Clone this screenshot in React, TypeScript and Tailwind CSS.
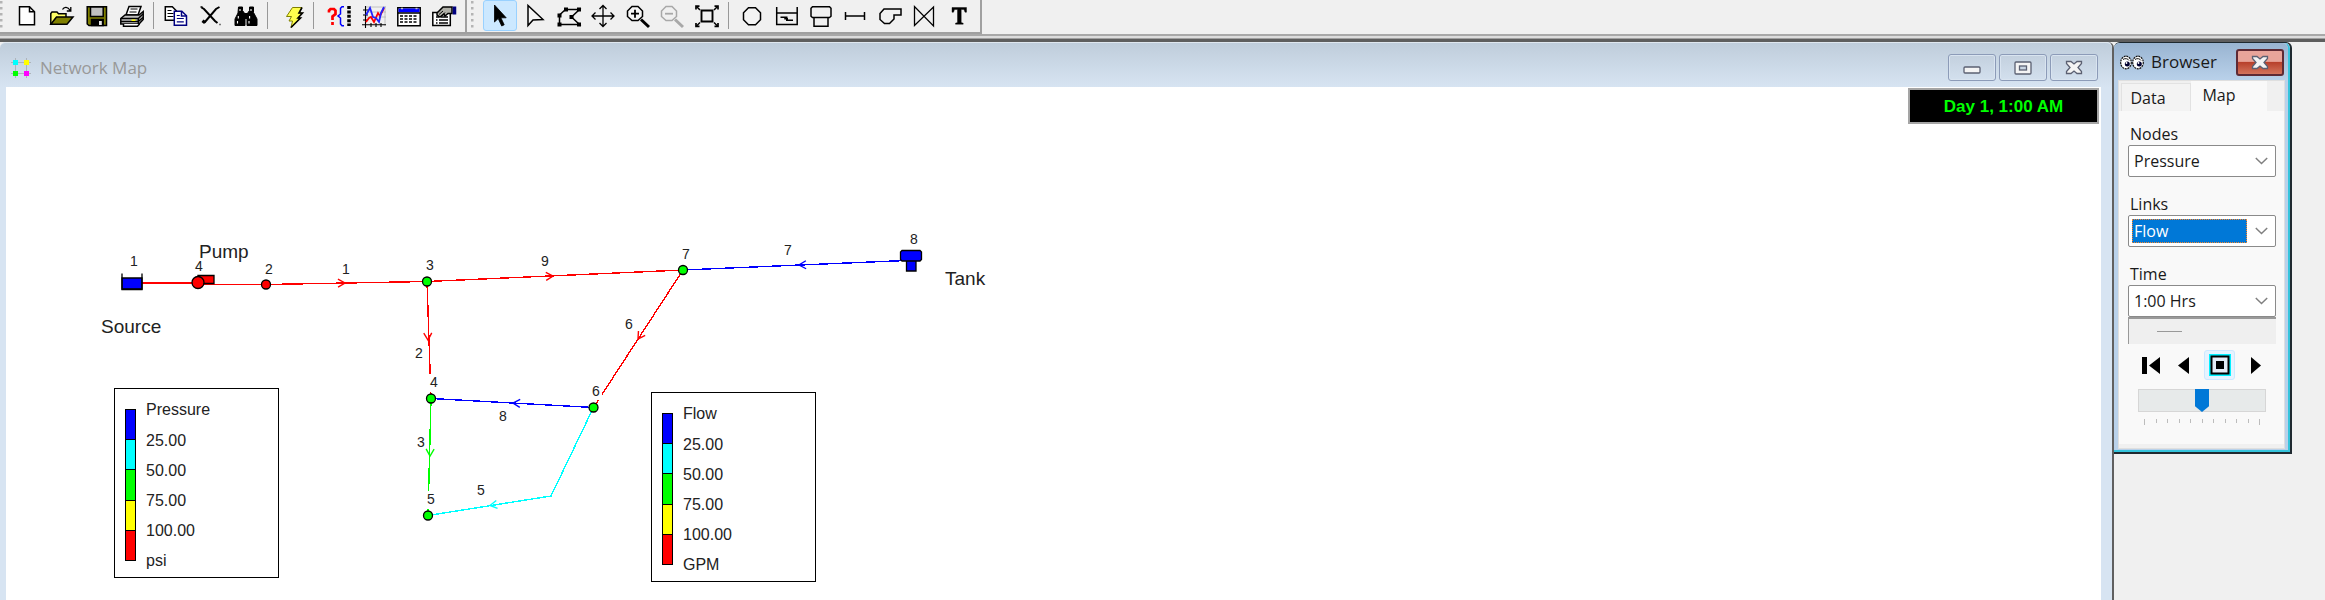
import { useState, type ReactNode } from "react";

type Tool = { name: string; icon: ReactNode };

function Icon({ children }: { children: ReactNode }) {
  return (
    <svg viewBox="0 0 24 24" className="h-6 w-6 shrink-0 overflow-visible" fill="none" stroke="#000" strokeWidth="1.5" aria-hidden="true">
      {children}
    </svg>
  );
}

const fileTools: Tool[] = [
  {
    name: "New",
    icon: (
      <Icon>
        <path d="M4.5 2.8h10l5 5v13H4.5z" fill="#fff" />
        <path d="M14.5 2.8v5h5" />
      </Icon>
    ),
  },
  {
    name: "Open",
    icon: (
      <Icon>
        <path d="M.8 20V9.5L2 8h5l1.5 1.7H16V13" fill="#ffff66" />
        <path d="M.8 20.3 6.5 13H23l-6 7.3z" fill="#808000" />
        <path d="M12.5 5.5c1.5-3 5.5-3 7.5.8M20.8 3v4h-4" strokeWidth="1.3" />
      </Icon>
    ),
  },
  {
    name: "Save",
    icon: (
      <Icon>
        <path d="M2.2 2.8h19.3v18.8H4L2.2 20z" fill="#808000" />
        <path d="M5.5 3h12.7v9.6H5.5z" fill="#c0c0c0" />
        <path d="M6.5 15.5h11.7v6H6.5z" fill="#000" />
        <path d="M14 17h2.8v4H14z" fill="#e8e8e8" stroke="none" />
      </Icon>
    ),
  },
  {
    name: "Print",
    icon: (
      <Icon>
        <path d="M6 11 9 2.5h12l-3 8.5z" fill="#fff" />
        <path d="M10.5 5h7M9.5 8h7" strokeWidth="1.2" />
        <path d="M.8 14.5 5 11h14l4.2-3.5v8L19 20H.8z" fill="#c0c0c0" />
        <path d="M.8 14.5h17.5L23 10M.8 17.5h17.5l4.7-4M18.3 14.5V20" />
        <path d="M3.5 20v2.3h14l2-2.3" fill="#fff" />
        <path d="M11.5 16.2h4" stroke="#ff0" />
      </Icon>
    ),
  },
];

const editTools: Tool[] = [
  {
    name: "Copy",
    icon: (
      <Icon>
        <path d="M1.3 2.8h7l4 4v9.5h-11z" fill="#fff" />
        <path d="M3.5 6.5h4M3.5 9.5h6M3.5 12.5h6" strokeWidth="1.2" />
        <path d="M10.3 7.3h7.5l4.7 4.5v9.5H10.3z" fill="#fff" stroke="#000080" />
        <path d="M17.5 7.3v4.8h5" stroke="#000080" />
        <path d="M12.8 11.5h3M12.8 14.5h7M12.8 17.8h7" stroke="#000080" strokeWidth="1.2" />
      </Icon>
    ),
  },
  {
    name: "Delete",
    icon: (
      <Icon>
        <path d="M2.5 3.5 5 5l11 12 2.5 2M20.5 3 17 5 5.5 18.5" strokeWidth="2" />
        <path d="m5.8 16.5-2 2.5" strokeWidth="3.4" />
        <path d="M1.5 3h2M20.5 20.5h1" />
      </Icon>
    ),
  },
  {
    name: "Find",
    icon: (
      <Icon>
        <path d="M4.5 3h4v3.5L11 10v11.5H1V15l3-6zM15.5 3h4v5.5L23 15v6.5H13V10l2.5-3.5z" fill="#000" strokeWidth="1" />
        <path d="M10 9h4v6h-4z" fill="#000" stroke="none" />
        <path d="M6 5v2M17 5v2M4.3 12v2.5M15.6 12v2.5M3.5 17v2.5M15 17v2.5" stroke="#fff" strokeWidth="1.1" />
      </Icon>
    ),
  },
];

const runTools: Tool[] = [
  {
    name: "Run",
    icon: (
      <Icon>
        <path d="M10.5 3.5H20l-3 5.5h3.5l-4.5 5h2.5L9 23.5l1.5-6.5H7l2.5-4.5H4.5z" fill="#ffff4d" stroke="#808000" strokeWidth="1" />
        <path d="m20 3.5-3 5.5h3.5l-4.5 5h2.5L9 23.5" strokeWidth="1.6" />
      </Icon>
    ),
  },
];

const reportTools: Tool[] = [
  {
    name: "Query",
    icon: (
      <Icon>
        <path d="M2 8.500V6.500L3.500 5H7L8.500 6.500V10L5.500 12.500V16M5.500 18v3" stroke="#f00" strokeWidth="2.700" />
        <path d="M17 2.800h-2l-1.500 1.500V10L11 12l2.500 2v6l1.500 1.700h2" stroke="#00f" />
        <path d="M22 2v20" strokeWidth="3.500" strokeDasharray="3 1.400" />
      </Icon>
    ),
  },
  {
    name: "Graph",
    icon: (
      <Icon>
        <path d="M4 3h20M4 8h20M4 13h20M23 2v20" stroke="#b5b5b5" strokeWidth=".8" />
        <path d="M3.500 2v22M0 20.700h24M1 6h5M1 11h5M1 16h5M9 19v4M14 19v4M19 19v4" strokeWidth="1.100" />
        <path d="m4 18 3-4 2-1 3 5 4-9 2 3 4-8" stroke="#f00" strokeWidth="1.800" />
        <path d="m4 11 4-7 3 9 3 1 3 4 2-9 3-6" stroke="#22f" strokeWidth="1.800" />
      </Icon>
    ),
  },
  {
    name: "Table",
    icon: (
      <Icon>
        <path d="M.8 3.800h22.400v18H.8z" fill="#fff" />
        <path d="M1.500 4.500h21v3.800h-21z" fill="#00f" stroke="none" />
        <path d="M4 4.500h2M18.500 4.500h2" stroke="#c0c0c0" />
        <path d="M.8 9h22.400" />
        <path d="M3 12h18M3 15h18M3 18h18" strokeDasharray="3 1.500" strokeWidth="1.600" />
      </Icon>
    ),
  },
  {
    name: "Options",
    icon: (
      <Icon>
        <path d="M.8 8.500h17.500v13H.8z" fill="#fff" />
        <path d="M4 13h3M9 13h7M4 16h1.500M7 16h9M4 19h1.500M7 19h9" strokeWidth="1.400" />
        <path d="M5 11V9l6-6h9v6.500h-4L13 12l-1-2-4 3z" fill="#b0b0a8" />
        <path d="M7 10.500 11 7M9.500 12 13 8.500" strokeWidth="1" />
        <path d="M22.500 2.500v8" stroke="#000080" strokeWidth="3.500" />
      </Icon>
    ),
  },
];

const mapTools: Tool[] = [
  {
    name: "Select Object",
    icon: (
      <Icon>
        <path d="M6.500 1v17l3.700-3.500 3.500 7.500 2.500-1.200-3.300-7h5.300z" fill="#000" strokeWidth=".8" />
      </Icon>
    ),
  },
  {
    name: "Select Vertex",
    icon: (
      <Icon>
        <path d="M5 1.500v20l5-5.500 10-.5z" fill="#fff" fillOpacity=".3" />
      </Icon>
    ),
  },
  {
    name: "Select Region",
    icon: (
      <Icon>
        <path d="M2.500 20.500v-9.500l6-5.500h14l-8 7.500 8 7.500z" />
        <path d="M.5 9.500h4v4h-4zM7 3.500h4v4H7zM20 3.500h4v4h-4zM12.500 11h4v4h-4zM.5 18.500h4v4h-4zM20 18.500h4v4h-4z" fill="#000" stroke="none" />
      </Icon>
    ),
  },
  {
    name: "Pan",
    icon: (
      <Icon>
        <path d="M12 1.500v21M1 12h22M8.500 5 12 1.500 15.500 5M8.500 19l3.500 3.500 3.500-3.500M4.500 8.500 1 12l3.500 3.500M19.500 8.500 23 12l-3.500 3.500" strokeWidth="1.300" />
      </Icon>
    ),
  },
  {
    name: "Zoom In",
    icon: (
      <Icon>
        <path d="M6 2.500h6l4.500 4.500v5.500L12 16.500H6L1.500 12.500V7z" fill="#fff" fillOpacity=".4" />
        <path d="M5 9.700h8M9 5.700v8" strokeWidth="1.800" />
        <path d="m15 15.500 8 7.500" strokeWidth="3" />
      </Icon>
    ),
  },
  {
    name: "Zoom Out",
    icon: (
      <Icon>
        <g stroke="#a8a8a8">
          <path d="M6 2.500h6l4.500 4.500v5.500L12 16.500H6L1.500 12.500V7z" />
          <path d="M5 9.700h8" strokeWidth="1.800" />
          <path d="m15 15.500 8 7.500" strokeWidth="3" />
        </g>
      </Icon>
    ),
  },
  {
    name: "Full Extent",
    icon: (
      <Icon>
        <path d="M6.500 6.500h11v11h-11z" strokeWidth="1.900" />
        <path d="m1.500 2.500 3.500 3.500M22.500 2.500 19 6M1.500 22 5 18.500M22.500 22 19 18.500" />
        <path d="M1 5.500V2.200h3.500M19.500 2.200H23v3.300M1 19v3.300h3.500M19.500 22.300H23V19" strokeWidth="1.700" />
      </Icon>
    ),
  },
];

const addTools: Tool[] = [
  {
    name: "Add Junction",
    icon: (
      <Icon>
        <path d="M8.500 3.700h7l5 5v7l-5 5h-7l-5-5v-7z" fill="#fff" fillOpacity=".3" />
      </Icon>
    ),
  },
  {
    name: "Add Reservoir",
    icon: (
      <Icon>
        <path d="M1.700 3v17.500h20.500V3M1.700 9h20.500M5.500 13.200h7M10 13.200v1.500h3M11 16.200h7" />
      </Icon>
    ),
  },
  {
    name: "Add Tank",
    icon: (
      <Icon>
        <path d="M3.500 2.700h17l1.500 1.500v8L20.500 13.500h-17L2 12.200v-8zM5 13.700v8.500h14v-8.500" />
      </Icon>
    ),
  },
  {
    name: "Add Pipe",
    icon: (
      <Icon>
        <path d="M2.500 8v8M21.500 8v8M2.500 12h19" />
      </Icon>
    ),
  },
  {
    name: "Add Pump",
    icon: (
      <Icon>
        <path d="M6 5h17v6h-7v4l-4.500 4.500h-5L2 15.500v-6z" />
      </Icon>
    ),
  },
  {
    name: "Add Valve",
    icon: (
      <Icon>
        <path d="M2.500 2.500v19L21.500 3v19z" strokeWidth="1.300" />
      </Icon>
    ),
  },
  {
    name: "Add Label",
    icon: (
      <Icon>
        <path d="M5 3.500h14.500v4.700H18L17 5.500h-2.800v13l2 .7v1H8.500v-1l2-.7v-13H7.500l-1 2.700H5z" fill="#000" strokeWidth=".4" />
      </Icon>
    ),
  },
];

function ToolGroup({ tools, className, active }: { tools: Tool[]; className: string; active?: string }) {
  return (
    <div className={`flex ${className}`}>
      {tools.map((t) => (
        <button
          key={t.name}
          type="button"
          aria-label={t.name}
          className={`flex h-[31px] flex-1 items-center justify-center rounded-[3px] border ${
            t.name === active ? "border-[#99d1ff] bg-[#cce8ff]" : "border-transparent"
          }`}
        >
          {t.icon}
        </button>
      ))}
    </div>
  );
}

function Separator() {
  return <div className="mx-1 mt-[2px] h-[27px] w-px shrink-0 bg-[#989898]" />;
}

function Grip() {
  return (
    <svg viewBox="0 0 4 30" className="mx-1 h-[30px] w-1 shrink-0" aria-hidden="true">
      {[1, 7, 13, 19, 25].map((y) => (
        <rect key={y} x="0" y={y} width="2.500" height="2.500" fill="#b4b4b4" />
      ))}
    </svg>
  );
}

function Toolbars() {
  return (
    <header className="bg-[#f0f0f0]">
      <div className="flex border-b-2 border-[#a8a8a8]">
        <div className="flex h-[34px] border-r-2 border-b-2 border-[#a0a0a0]">
          <div className="-ml-1 pr-px">
            <Grip />
          </div>
          <ToolGroup tools={fileTools} className="w-[140px]" />
          <Separator />
          <ToolGroup tools={editTools} className="w-[105px]" />
          <Separator />
          <ToolGroup tools={runTools} className="w-[37px] pl-[6px]" />
          <Separator />
          <ToolGroup tools={reportTools} className="ml-1 w-[139px]" />
          <div className="w-1" />
        </div>
        <div className="flex h-[34px] border-r-2 border-b-2 border-[#a0a0a0]">
          <Grip />
          <ToolGroup tools={mapTools} className="ml-1 w-[241px]" active="Select Object" />
          <Separator />
          <ToolGroup tools={addTools} className="ml-[2px] w-[241px]" />
          <div className="w-1" />
        </div>
      </div>
      <div className="h-[2px] bg-[#dcdcdc]" />
      <div className="h-px bg-[#a0a0a0]" />
      <div className="h-[3px] bg-[#5e5e5e]" />
    </header>
  );
}

const RED = "#ff0000";
const BLUE = "#0000ff";
const CYAN = "#00ffff";
const GREEN = "#00ff00";

const links = [
  { id: "source", color: RED, points: "142,283 198,283 198,284.5 266,284.5" },
  { id: "1", color: RED, points: "266,284.5 427,281.5" },
  { id: "9", color: RED, points: "427,281.5 683,270" },
  { id: "7", color: BLUE, points: "683,270 906,260.500" },
  { id: "2", color: RED, points: "427,281.5 431,398.5" },
  { id: "6", color: RED, points: "683,270 593.5,407.5" },
  { id: "8", color: BLUE, points: "593.5,407.5 431,398.5" },
  { id: "3", color: GREEN, points: "431,398.5 428,515.5" },
  { id: "5", color: CYAN, points: "593.5,407.5 551,496 428,515.5" },
];

const arrows = [
  { x: 345, y: 283, angle: -1, color: RED },
  { x: 553, y: 276, angle: -3, color: RED },
  { x: 799, y: 265, angle: 178, color: BLUE },
  { x: 428, y: 340, angle: 88, color: RED },
  { x: 638, y: 339, angle: 123, color: RED },
  { x: 513, y: 403, angle: 183, color: BLUE },
  { x: 430, y: 456, angle: 91, color: GREEN },
  { x: 490, y: 505.5, angle: 171, color: CYAN },
];

const nodes = [
  { id: "2", x: 266, y: 284.5, color: RED },
  { id: "3", x: 427, y: 281.5, color: GREEN },
  { id: "7", x: 683, y: 270, color: GREEN },
  { id: "4", x: 431, y: 398.5, color: GREEN },
  { id: "6", x: 593.5, y: 407.5, color: GREEN },
  { id: "5", x: 428, y: 515.5, color: GREEN },
];

const labels = [
  { text: "1", x: 134, y: 266 },
  { text: "4", x: 199, y: 271 },
  { text: "2", x: 269, y: 274 },
  { text: "1", x: 346, y: 274 },
  { text: "3", x: 430, y: 270 },
  { text: "9", x: 545, y: 266 },
  { text: "7", x: 686, y: 259 },
  { text: "7", x: 788, y: 255 },
  { text: "8", x: 914, y: 244 },
  { text: "2", x: 419, y: 358 },
  { text: "4", x: 434, y: 387 },
  { text: "6", x: 629, y: 329 },
  { text: "6", x: 596, y: 396 },
  { text: "8", x: 503, y: 421 },
  { text: "3", x: 421, y: 447 },
  { text: "5", x: 431, y: 504 },
  { text: "5", x: 481, y: 495 },
];

function Network() {
  return (
    <svg
      viewBox="6 87 1000 513"
      className="h-[513px] w-[1000px]"
      fontFamily="'Liberation Sans', Arial, sans-serif"
      role="img"
      aria-label="Network"
    >
      <g fill="none" strokeWidth="1.400">
        {links.map((l) => (
          <polyline key={l.id} points={l.points} stroke={l.color} shapeRendering="crispEdges" />
        ))}
        {arrows.map((a) => (
          <path
            key={`${a.x}-${a.y}`}
            d="M-7-4 0 0l-7 4"
            stroke={a.color}
            transform={`translate(${a.x} ${a.y}) rotate(${a.angle})`}
          />
        ))}
      </g>
      <g fill="#fff">
        <rect x="428" y="374" width="11" height="18" />
        <rect x="591" y="383" width="11" height="17" />
        <rect x="425" y="491" width="11" height="18" />
      </g>
      <g stroke="#000" strokeWidth="1.300">
        <path d="M122 278h20v11h-20z" fill={BLUE} />
        <path d="M122 273.500v16h20v-16" fill="none" />
        <path d="M198 275.500h16v8h-16z" fill={RED} />
        <circle cx="198" cy="282.500" r="6" fill={RED} />
        <path d="M902 250.500h18l1.500 1.500v7.500L920 261h-18l-1.500-1.500V252zM906.500 261v10h9.500v-10z" fill={BLUE} />
        {nodes.map((n) => (
          <circle key={n.id} cx={n.x} cy={n.y} r="4.500" fill={n.color} />
        ))}
      </g>
      <g fill="#222" fontSize="14" textAnchor="middle">
        {labels.map((l) => (
          <text key={`${l.x}-${l.y}`} x={l.x} y={l.y}>
            {l.text}
          </text>
        ))}
      </g>
      <g fill="#222" fontSize="19">
        <text x="199" y="258">Pump</text>
        <text x="101" y="333">Source</text>
        <text x="945" y="285">Tank</text>
      </g>
    </svg>
  );
}

function Legend({ title, unit, className }: { title: string; unit: string; className: string }) {
  return (
    <div
      className={`absolute flex h-[190px] w-[165px] border border-black bg-white pl-[10px] font-['Liberation_Sans',Arial,sans-serif] text-base text-[#222] ${className}`}
    >
      <div className="mt-5 flex h-[152px] w-[11px] flex-col divide-y divide-black border border-black">
        <div className="flex-1 bg-[#0000ff]" />
        <div className="flex-1 bg-[#00ffff]" />
        <div className="flex-1 bg-[#00ff00]" />
        <div className="flex-1 bg-[#ffff00]" />
        <div className="flex-1 bg-[#ff0000]" />
      </div>
      <ul className="ml-[10px] pt-[6px] leading-[30px]">
        <li className="pb-px">{title}</li>
        <li>25.00</li>
        <li>50.00</li>
        <li>75.00</li>
        <li>100.00</li>
        <li>{unit}</li>
      </ul>
    </div>
  );
}

function CaptionButton({ name, children }: { name: string; children: ReactNode }) {
  return (
    <button
      type="button"
      aria-label={name}
      className="flex h-[27px] w-12 items-center justify-center rounded-[3px] border border-[#8c9bb8] bg-linear-to-b from-[#c3d0de] to-[#d3e0ee] shadow-[inset_0_0_0_1px_#d9e4f0]"
    >
      {children}
    </button>
  );
}

function CloseGlyph() {
  return (
    <svg viewBox="0 0 18 15" className="h-[15px] w-[18px]" aria-hidden="true">
      <path d="M1.500 1.500h4.500l3 2.500 3-2.500h4.500v2L13 7.500l3.500 4v2H12l-3-2.500-3 2.500H1.500v-2L5 7.500l-3.500-4z" fill="#f4f4f4" stroke="#5b6072" strokeWidth="1.300" />
    </svg>
  );
}

function MapWindow() {
  return (
    <main className="flex min-w-0 flex-1 flex-col rounded-t-md border-r-2 border-[#606060] bg-[#d7e4f2] pr-[11px] pl-[6px]">
      <div className="-mr-[11px] -ml-[6px] flex h-[45px] items-center rounded-t-md border-t border-[#dfe7ef] bg-linear-to-b from-[#bfcddb] to-[#d7e4f2] pt-[9px] pr-[14px] pb-1 pl-[11px]">
        <svg viewBox="0 0 20 20" className="h-5 w-5" aria-hidden="true">
          <path d="M4.500 0v20M15.500 0v20M0 4.500h20M0 15.500h20" stroke="#aeb4ba" strokeWidth="1" />
          <rect x="2" y="2" width="5" height="5" fill="#00ffff" />
          <rect x="13" y="2" width="5" height="5" fill="#ffff00" />
          <rect x="2" y="13" width="5" height="5" fill="#00ff00" />
          <rect x="13" y="13" width="5" height="5" fill="#ff00ff" />
        </svg>
        <h1 className="ml-[9px] flex-1 text-[17px] text-[#999]">Network Map</h1>
        <div className="flex gap-[3px]">
          <CaptionButton name="Minimize">
            <svg viewBox="0 0 18 8" className="mt-1 h-2 w-[18px]" aria-hidden="true">
              <rect x="1" y="1" width="16" height="6" rx="1" fill="#f4f4f4" stroke="#5b6072" strokeWidth="1.300" />
            </svg>
          </CaptionButton>
          <CaptionButton name="Maximize">
            <svg viewBox="0 0 18 14" className="h-[14px] w-[18px]" aria-hidden="true">
              <rect x="1" y="1" width="16" height="12" rx="1" fill="#f4f4f4" stroke="#5b6072" strokeWidth="1.300" />
              <rect x="5.500" y="5" width="7" height="4" fill="#c8d5e3" stroke="#5b6072" strokeWidth="1.300" />
            </svg>
          </CaptionButton>
          <CaptionButton name="Close">
            <CloseGlyph />
          </CaptionButton>
        </div>
      </div>
      <div className="relative flex-1 overflow-hidden bg-white">
        <Network />
        <Legend title="Pressure" unit="psi" className="top-[301px] left-[108px]" />
        <Legend title="Flow" unit="GPM" className="top-[305px] left-[645px]" />
        <div className="absolute top-px right-[2px] flex h-9 w-[191px] items-center justify-center border-2 border-[#a5a5a5] bg-black pt-px font-['Liberation_Sans',Arial,sans-serif] text-[17px] font-bold text-[#00ff00]">
          Day 1, 1:00 AM
        </div>
      </div>
    </main>
  );
}

function Field({ label, options, initial, focused }: { label: string; options: string[]; initial: string; focused?: boolean }) {
  const [value, setValue] = useState(initial);
  const id = `field-${label.toLowerCase()}`;
  return (
    <div>
      <label htmlFor={id} className="block pl-[2px] text-base leading-[22px]">
        {label}
      </label>
      <div className="flex h-8 w-[148px] items-center rounded-[2px] border border-[#8a8a8a] bg-white p-[3px]">
        <select
          id={id}
          value={value}
          onChange={(e) => setValue(e.target.value)}
          className={`h-6 min-w-0 flex-1 appearance-none border pl-px text-base leading-[20px] outline-none ${
            focused ? "border-dotted border-[#ff8728] bg-[#0078d7] text-white" : "border-transparent bg-white"
          }`}
        >
          {options.map((o) => (
            <option key={o}>{o}</option>
          ))}
        </select>
        <svg viewBox="0 0 13 8" className="mr-1 ml-2 h-2 w-[13px] shrink-0" fill="none" stroke="#808080" strokeWidth="1.500" aria-hidden="true">
          <path d="m.8 1 5.700 5.500L12.200 1" />
        </svg>
      </div>
    </div>
  );
}

function Eye({ x }: { x: number }) {
  return (
    <g transform={`translate(${x} 0)`}>
      <ellipse cx="6" cy="7.500" rx="5.300" ry="6.300" fill="#fff" stroke="#111" strokeWidth="1.200" strokeDasharray="2 .7" />
      <path d="M3 4.500c2-1.500 5-1 6 1" fill="none" stroke="#111" strokeWidth="1" />
      <circle cx="7.300" cy="9" r="2.500" fill="#000030" />
      <circle cx="6.500" cy="8" r=".9" fill="#fff" />
    </g>
  );
}

function BrowserPanel() {
  const [step, setStep] = useState(5);
  return (
    <aside className="w-[178px] shrink-0 self-start rounded-t-md border-t border-r-2 border-b-2 border-[#1f2a30] bg-[#b9d1ea]">
      <div className="rounded-t-md border-r-2 border-b-2 border-[#35c4dc]">
        <div className="flex h-[37px] items-center rounded-t-md bg-linear-to-b from-[#99b4d1] to-[#b9d1ea] pt-px pr-1 pl-[6px]">
          <svg viewBox="0 0 24 15" className="h-[15px] w-6" aria-hidden="true">
            <Eye x={0} />
            <Eye x={12} />
          </svg>
          <h2 className="ml-[7px] flex-1 text-[17px]">Browser</h2>
          <button
            type="button"
            aria-label="Close browser"
            className="flex h-[27px] w-12 items-center justify-center rounded-[3px] border-2 border-[#5e2a35] bg-linear-to-b from-[#e8a49a] from-45% via-[#b8402c] via-50% to-[#d3735c]"
          >
            <CloseGlyph />
          </button>
        </div>
        <div className="mr-[3px] mb-px ml-1 border border-[#dfdfdf] bg-[#f0f0f0] pb-1">
          <div role="tablist" className="flex h-[30px] items-end pl-[2px]">
            <button role="tab" type="button" aria-selected="false" className="h-7 w-[70px] border border-b-0 border-[#e2e2e2] bg-[#f3f3f3] pr-4 text-base">
              Data
            </button>
            <button role="tab" type="button" aria-selected="true" className="h-[30px] w-[76px] bg-[#f9f9f9] pr-5 pb-[2px] text-base">
              Map
            </button>
          </div>
          <div role="tabpanel" className="bg-[#f9f9f9] px-[9px] pt-3 pb-[19px]">
            <div className="flex flex-col gap-4">
              <Field label="Nodes" initial="Pressure" options={["Pressure", "Elevation", "Demand", "Head"]} />
              <Field label="Links" initial="Flow" options={["Flow", "Diameter", "Velocity"]} focused />
              <Field label="Time" initial="1:00 Hrs" options={["0:00 Hrs", "1:00 Hrs", "2:00 Hrs"]} />
            </div>
            <div className="flex h-[27px] w-[148px] items-center border-t-2 border-l border-[#999] bg-[#efefef] pl-7">
              <div className="h-px w-[25px] bg-[#999]" />
            </div>
            <div className="mt-[5px] flex h-8 items-center pl-[7px]">
              <button type="button" aria-label="Rewind" className="flex h-8 w-8 items-center justify-center">
                <svg viewBox="0 0 18 17" className="h-[17px] w-[18px]" aria-hidden="true">
                  <path d="M0 0h5v17H0zM18 0v17L7 8.500z" />
                </svg>
              </button>
              <button type="button" aria-label="Back" className="flex h-8 w-8 items-center justify-center">
                <svg viewBox="0 0 11 17" className="h-[17px] w-[11px]" aria-hidden="true">
                  <path d="M11 0v17L0 8.500z" />
                </svg>
              </button>
              <button type="button" aria-label="Stop" className="mx-[5px] flex h-[30px] w-[31px] items-center justify-center rounded-[3px] border border-[#cce8ff] bg-[#e5f3ff]">
                <svg viewBox="0 0 22 22" className="h-[22px] w-[22px]" aria-hidden="true">
                  <rect width="22" height="22" fill="#00f0ff" />
                  <rect x="2.500" y="2.500" width="17" height="17" fill="#e4ecf6" stroke="#000" strokeWidth="2" />
                  <rect x="7" y="7" width="8" height="8" />
                </svg>
              </button>
              <button type="button" aria-label="Forward" className="flex h-8 w-8 items-center justify-center">
                <svg viewBox="0 0 10 17" className="h-[17px] w-[10px]" aria-hidden="true">
                  <path d="M0 0v17l10-8.500z" />
                </svg>
              </button>
            </div>
            <input
              type="range"
              min={0}
              max={10}
              value={step}
              onChange={(e) => setStep(Number(e.target.value))}
              aria-label="Animation speed"
              className="mt-2 ml-[10px] block h-[23px] w-[128px] appearance-none border border-[#d6d6d6] bg-[#e7eaea] [&::-webkit-slider-thumb]:h-[23px] [&::-webkit-slider-thumb]:w-[14px] [&::-webkit-slider-thumb]:appearance-none [&::-webkit-slider-thumb]:bg-[#0078d7] [&::-webkit-slider-thumb]:[clip-path:polygon(0_0,100%_0,100%_75%,50%_100%,0_75%)]"
            />
            <div className="mt-[7px] ml-[16px] flex h-[6px] w-[116px] justify-between">
              {Array.from({ length: 11 }, (_, i) => (
                <div key={i} className={`w-px bg-[#bcbcbc] ${i === 0 || i === 10 ? "h-[6px]" : "h-1"}`} />
              ))}
            </div>
          </div>
        </div>
      </div>
    </aside>
  );
}

export default function App() {
  return (
    <div className="flex min-h-screen flex-col bg-[#f0f0f0] font-['Open_Sans','Noto_Sans',sans-serif] text-[#1a1a1a]">
      <Toolbars />
      <div className="flex flex-1 pr-[33px]">
        <MapWindow />
        <BrowserPanel />
      </div>
    </div>
  );
}
